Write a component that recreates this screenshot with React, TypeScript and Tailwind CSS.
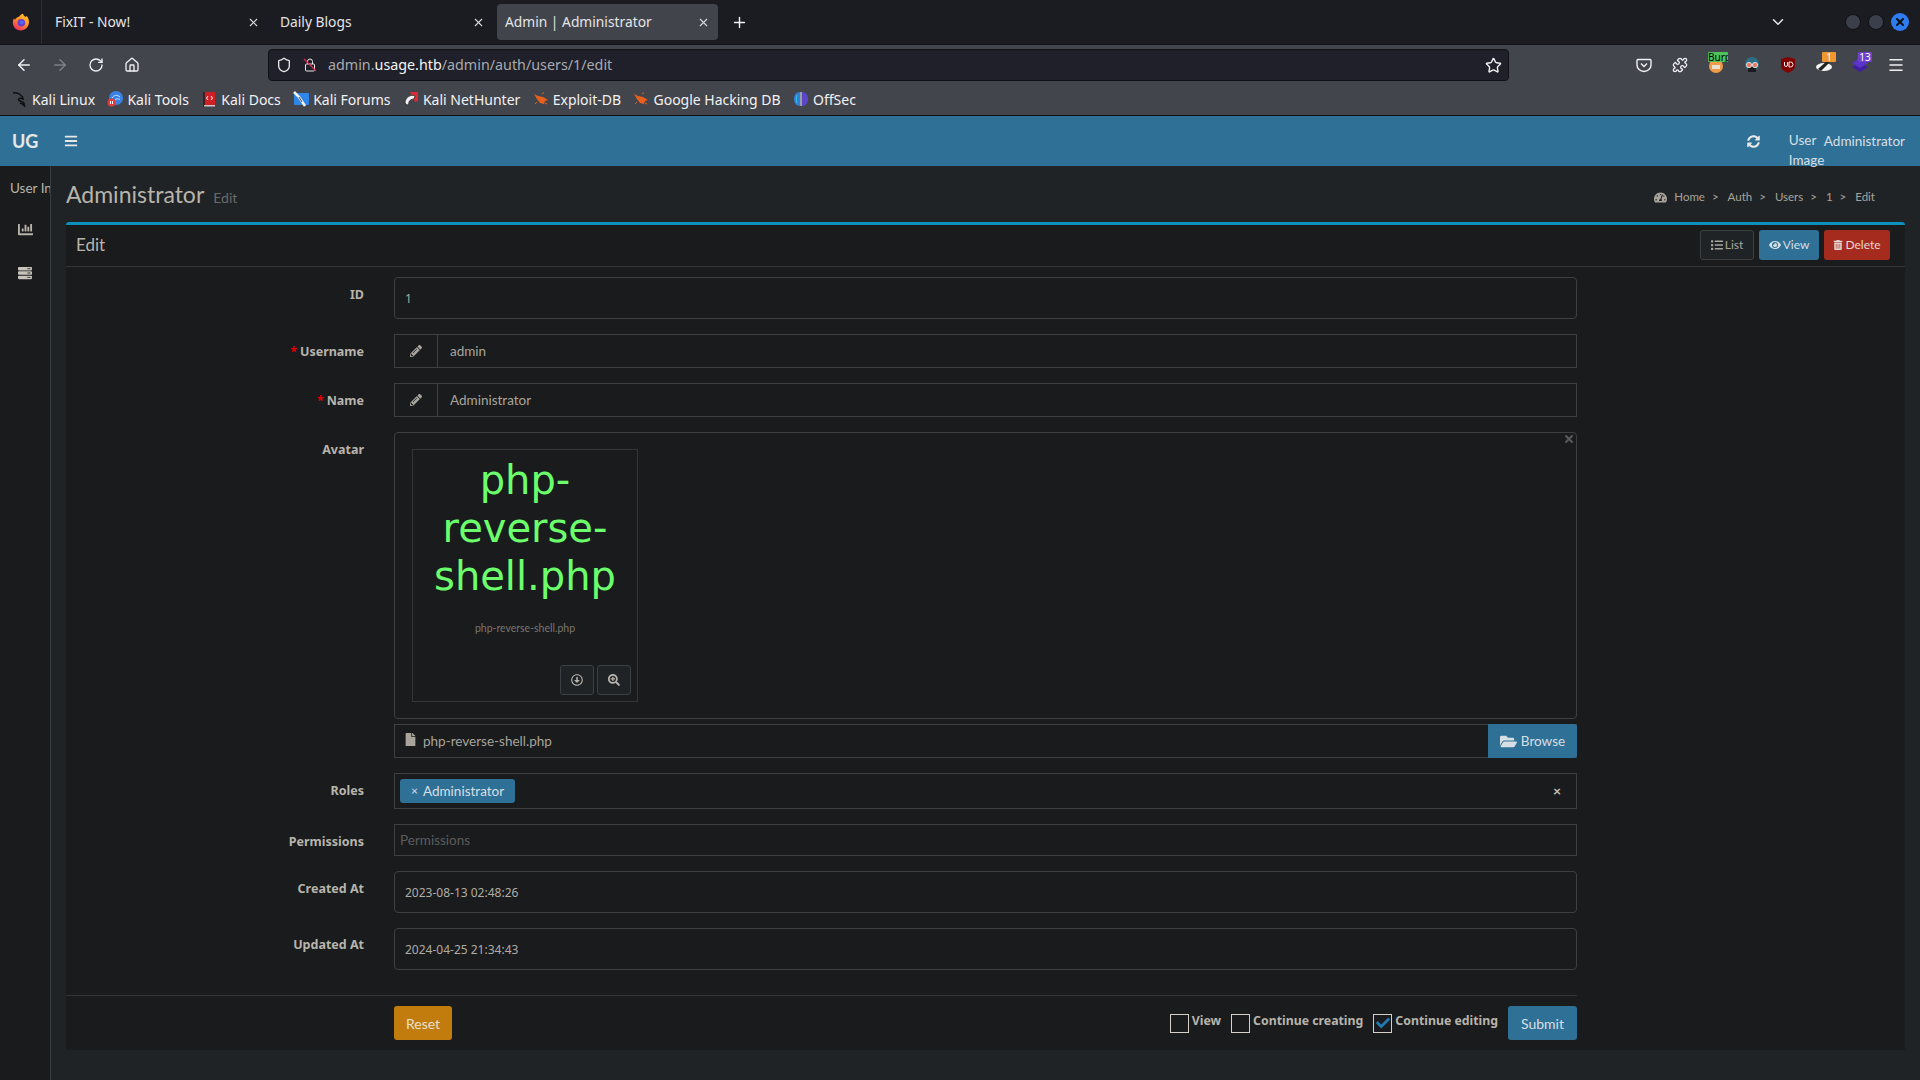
import React from 'react';
import {
  FaBars, FaSyncAlt, FaChartBar, FaServer, FaTachometerAlt, FaList, FaEye, FaTrashAlt,
  FaPencilAlt, FaFile, FaFolderOpen, FaSearchPlus, FaRegArrowAltCircleDown, FaCheck,
} from 'react-icons/fa';
import { ArrowLeft, ArrowRight, RotateCw, Home, Star, ChevronDown, Plus, X, Menu, Shield, Puzzle } from 'lucide-react';

const PAGE_FONT = { fontFamily: '"Lato", "Noto Sans", sans-serif' };
const LABEL_FONT = { fontFamily: '"Noto Sans", sans-serif' };

function Tab({ title, active }: { title: string; active?: boolean }) {
  return (
    <div className={`w-[221px] h-9 mr-[4px] flex items-center justify-between px-[8px] rounded-[4px] ${active ? 'bg-[#42444c]' : ''}`}>
      <span className="text-[13.8px] text-[#e4e4e6]">{title}</span>
      <X size={13} className="text-[#d8d8da]" />
    </div>
  );
}

function Firefox() {
  return (
    <svg width="18" height="18" viewBox="0 0 18 18">
      <defs>
        <linearGradient id="fx" x1="0.8" y1="0" x2="0.2" y2="1">
          <stop offset="0" stopColor="#ffc926" />
          <stop offset="0.5" stopColor="#ff8a2a" />
          <stop offset="1" stopColor="#f0246b" />
        </linearGradient>
      </defs>
      <path d="M11 .8c.3 1.6 1.3 2.2 2.4 3.1.8-.3 1.2-.5 1.4-.8 1.3 1.6 2.2 3.5 2.2 5.9 0 4.8-3.6 8.5-8.3 8.5C4.2 17.5.8 14.1.8 9.8c0-1.7.5-3.3 1.3-4.5.2.8.6 1.3 1 1.5.8-1.7 2.3-2.7 4-3 .3-.9 1.8-2.4 3.9-3z" fill="url(#fx)" />
      <circle cx="9.3" cy="9.8" r="3.8" fill="#6c3bd0" />
      <circle cx="9.8" cy="9.3" r="1.9" fill="#4a6ff0" />
    </svg>
  );
}

function Mark({ children }: { children: React.ReactNode }) {
  return <svg width="16" height="16" viewBox="0 0 16 16" className="shrink-0">{children}</svg>;
}

const BUG = (
  <Mark>
    <path d="M1 3l4 2 5 1 5 3-3 1-1 3-4-1-3-4z" fill="#e8601c" />
    <path d="M4 11l-2 2M9 3l2-1.5M12 12l2 1" stroke="#e8601c" strokeWidth="1" />
  </Mark>
);

const BOOKMARKS: { label: string; icon: React.ReactNode }[] = [
  { label: 'Kali Linux', icon: <Mark><path d="M1 2c3-.5 5 0 7 1.5 2 1.5 3 3 3 4.5-2-1-4-1-4.500.5-.5 1.5 3 1.5 5 3 .8.8 1 2 1 3.5-1-1.5-2.5-2.5-4.5-3" fill="none" stroke="#0d0e10" strokeWidth="1.5" /></Mark> },
  { label: 'Kali Tools', icon: <Mark><circle cx="9" cy="7" r="7" fill="#3a83e6" /><path d="M5 7c2-3 5-3.5 8-1M8 9c1.5-1.5 3-1.5 5-.5" stroke="#cfe4fa" fill="none" strokeWidth="1" /><circle cx="4.5" cy="11.5" r="4" fill="#e23b3b" /><path d="M3.5 10v3M5.5 10v3" stroke="#fff" /></Mark> },
  { label: 'Kali Docs', icon: <Mark><rect x="3" y="1" width="11" height="13" fill="#cf1f24" /><rect x="2" y="1" width="2" height="15" fill="#4a1a20" /><rect x="3" y="14" width="11" height="1.5" fill="#c9c9c9" /><path d="M7 5L5.5 7 7 9M10 5l1.5 2L10 9" stroke="#fff" fill="none" /></Mark> },
  { label: 'Kali Forums', icon: <Mark><rect x="1" y="2" width="15" height="12" rx="1" fill="#2f86e8" /><path d="M1 1l5 5 6 9" stroke="#f4f4f4" strokeWidth="2.5" fill="none" /><path d="M6 6l3 5" stroke="#1a1a1a" strokeWidth=".8" /></Mark> },
  { label: 'Kali NetHunter', icon: <Mark><path d="M7 1h8v9l-3 1z" fill="#dc2b35" /><path d="M12 5C8 3 3 6 2 11c0 2 2 3 4 3-1-3 1-6 5-6z" fill="#f2f2f2" stroke="#1a1a1a" strokeWidth=".7" /></Mark> },
  { label: 'Exploit-DB', icon: BUG },
  { label: 'Google Hacking DB', icon: BUG },
  { label: 'OffSec', icon: <Mark><path d="M7 1C3 1 1 4 1 8s2 7 6 7z" fill="#2f7fd8" /><path d="M9 1c4 0 6 3 6 7s-2 7-6 7z" fill="#5b46c8" /><path d="M4 4c-1 2-1 6 0 8" stroke="#38c6e0" fill="none" /><rect x="7.4" y="1" width="1.2" height="14" fill="#d8d8d8" /></Mark> },
];

function Bar({ children }: { children: React.ReactNode }) {
  return <div className="w-9 h-[18px] flex items-center justify-center relative text-[#f0f0f2]">{children}</div>;
}

function BrowserChrome() {
  return (
    <div style={{ fontFamily: '"Noto Sans", sans-serif' }}>
      <div className="h-[44px] bg-[#1b1c22] flex items-center">
        <div className="w-[42px] h-full flex items-center justify-center border-r border-[#2b2c32]"><Firefox /></div>
        <div className="w-[5px]" />
        <Tab title="FixIT - Now!" />
        <Tab title="Daily Blogs" />
        <Tab title="Admin | Administrator" active />
        <Plus size={17} className="text-[#f0f0f2] ml-[9px]" />
        <div className="flex-1" />
        <ChevronDown size={18} className="text-[#e8e8ea] mr-[58px]" />
        <div className="w-4 h-4 rounded-full bg-[#3a3f4b] border border-[#111] mr-[7px]" />
        <div className="w-4 h-4 rounded-full bg-[#3a3f4b] border border-[#111] mr-[7px]" />
        <div className="w-[18px] h-[18px] rounded-full bg-[#2f7bf0] flex items-center justify-center mr-[11px]"><X size={12} strokeWidth={4} className="text-[#101010]" /></div>
      </div>
      <div className="h-[41px] bg-[#43454d] flex items-center border-t border-[#111216] pl-[6px]">
        <Bar><ArrowLeft size={18} /></Bar>
        <Bar><ArrowRight size={18} className="text-[#7e8087]" /></Bar>
        <Bar><RotateCw size={16} /></Bar>
        <Bar><Home size={16} /></Bar>
        <div className="w-[1241px] h-8 ml-[118px] bg-[#1f2029] border border-[#111216] rounded-[4px] flex items-center pl-[7px] pr-[6px]">
          <Shield size={16} className="text-[#e8e8ea]" />
          <svg width="16" height="16" viewBox="0 0 16 16" className="ml-[10px]" fill="none">
            <rect x="3.5" y="7" width="9" height="7" rx="1" stroke="#e8e8ea" />
            <path d="M5.5 7V4.5a2.5 2.5 0 0 1 5 0V7" stroke="#e8e8ea" />
            <path d="M2 2l12 12" stroke="#e0284f" strokeWidth="1.3" />
          </svg>
          <span className="ml-[10px] text-[14.3px] text-[#a9aab0]">admin.<span className="text-[#f4f4f5]">usage.htb</span>/admin/auth/users/1/edit</span>
          <div className="flex-1" />
          <Star size={17} className="text-[#f0f0f2]" />
        </div>
        <div className="w-[117px]" />
        <Bar>
          <svg width="16" height="16" viewBox="0 0 16 16" fill="none" stroke="#f0f0f2" strokeWidth="1.4"><path d="M2 2.5h12a1 1 0 0 1 1 1V8a7 6.5 0 0 1-14 0V3.5a1 1 0 0 1 1-1z" /><path d="M5 6.5l3 3 3-3" /></svg>
        </Bar>
        <Bar><Puzzle size={16} /></Bar>
        <Bar>
          <svg width="16" height="16" viewBox="0 0 16 16"><circle cx="8" cy="9" r="7" fill="#ef9b47" /><rect x="4" y="8" width="8" height="4" fill="#e8e0d0" /></svg>
          <span className="absolute top-[-4px] left-[10px] h-[10px] w-[20px] bg-[#4fc25c] text-[10px] leading-[10px] text-black overflow-hidden rounded-[1px] whitespace-nowrap">Burp</span>
        </Bar>
        <Bar>
          <svg width="16" height="16" viewBox="0 0 16 16"><circle cx="8" cy="7" r="7" fill="#2a6f86" /><rect x="4" y="10" width="8" height="5" fill="#1c1c20" /><circle cx="5" cy="8" r="2.6" fill="#ee7863" stroke="#ddd" /><circle cx="11" cy="8" r="2.6" fill="#ee7863" stroke="#ddd" /></svg>
        </Bar>
        <Bar>
          <svg width="14" height="16" viewBox="0 0 14 16"><path d="M7 0l7 2v7c0 3-3 5-7 7-4-2-7-4-7-7V2z" fill="#800000" /><path d="M3.5 5v3a1.5 1.5 0 0 0 3 0V5M8 5v5h1.5a2.5 2.5 0 0 0 0-5z" fill="none" stroke="#eee" /></svg>
        </Bar>
        <Bar>
          <svg width="16" height="14" viewBox="0 0 16 14"><ellipse cx="8" cy="9" rx="8" ry="4" fill="#f3f3f3" /><path d="M2 11l9-8 2 2-8 8z" fill="#222" /></svg>
          <span className="absolute top-[-4px] left-[16px] h-[10px] w-[14px] bg-[#f0982f] text-[10px] leading-[10px] text-white text-center rounded-[1px]">1</span>
        </Bar>
        <Bar>
          <svg width="16" height="14" viewBox="0 0 16 14"><path d="M8 4l8 5-8 5-8-5z" fill="#3f1f9e" /><path d="M8 0l8 5-8 5-8-5z" fill="#5a35c9" /></svg>
          <span className="absolute top-[-4px] left-[16px] h-[10px] w-[14px] bg-[#6f42c9] text-[10px] leading-[10px] text-white text-center rounded-[1px]">13</span>
        </Bar>
        <Bar><Menu size={18} /></Bar>
      </div>
      <div className="h-[31px] bg-[#43454d] border-b border-[#101114] flex items-center pl-[12px] pb-[2px] gap-[12.4px] text-[14px] text-[#f2f2f3]">
        {BOOKMARKS.map((b) => (
          <div key={b.label} className="flex items-center gap-[4px]">{b.icon}<span>{b.label}</span></div>
        ))}
      </div>
    </div>
  );
}

function Sidebar() {
  return (
    <div className="w-[51px] shrink-0 bg-[#191b1d] border-r border-[#3a3d3f] overflow-hidden">
      <div className="pl-[10px] mt-[13px] text-[13.5px] text-[#b8b4ab] whitespace-nowrap leading-[18px]">User Information</div>
      <FaChartBar size={15} className="ml-[18px] mt-[25px] text-[#b8b4ab]" />
      <FaServer size={14} className="ml-[18px] mt-[29px] text-[#c8c4bb]" />
    </div>
  );
}

function Crumb({ children }: { children: React.ReactNode }) {
  return <span className="text-[11.5px] text-[#a8a49c]">{children}</span>;
}

function Row({ label, required, labelPad, children }: { label: string; required?: boolean; labelPad: number; children: React.ReactNode }) {
  return (
    <div className="flex items-start mb-[15px]">
      <div className="w-[298px] text-right text-[12.5px] font-bold text-[#b8b4ab] leading-[18px]" style={{ ...LABEL_FONT, paddingTop: labelPad }}>
        {required && <span className="text-[#e00000] mr-[3px]">*</span>}
        {label}
      </div>
      <div className="w-[1183px] ml-[30px]">{children}</div>
    </div>
  );
}

function PlainInput({ value }: { value: string }) {
  return (
    <div className="h-[42px] border border-[#3d4042] rounded-[4px] flex items-center pl-[10px] pt-[2px] text-[12px] text-[#b0aca4]" style={LABEL_FONT}>{value}</div>
  );
}

function AddonInput({ value }: { value: string }) {
  return (
    <div className="h-[34px] border border-[#3d4042] flex items-center text-[13.5px] text-[#a8a49c]">
      <div className="w-[43px] h-full border-r border-[#3d4042] flex items-center justify-center">
        <FaPencilAlt size={12} className="text-[#a8a49c]" />
      </div>
      <span className="pl-[12px]">{value}</span>
    </div>
  );
}

function Check({ label, checked }: { label: string; checked?: boolean }) {
  return (
    <div className="flex items-center ml-[10px]">
      <div className="w-[19px] h-[19px] border border-[#d4d0c8] flex items-center justify-center mr-[3px]">
        {checked && <FaCheck size={14} className="text-[#2279b0]" />}
      </div>
      <span className="text-[12.3px] font-bold text-[#b8b4ab] -mt-[3px]" style={LABEL_FONT}>{label}</span>
    </div>
  );
}

function AvatarBox() {
  return (
    <div className="relative h-[287px] border border-[#3d4042] rounded-[4px] pl-[17px] pt-[16px]">
      <X size={12} strokeWidth={4} className="absolute top-0 right-[1px] text-[#5a5a5a]" />
      <div className="relative w-[226px] h-[253px] border border-[#333638] flex flex-col items-center">
        <div className="mt-[6px] w-full px-[5px] text-center text-[40px] leading-[48px] text-[#6cff6c]" style={{ fontFamily: '"DejaVu Sans", sans-serif' }}>
          php-reverse-shell.php
        </div>
        <div className="mt-[21px] text-[10.5px] text-[#7a7670]">php-reverse-shell.php</div>
        <div className="absolute right-[6px] bottom-[6px] flex gap-[3px]">
          <div className="w-[34px] h-[30px] bg-[#1f2325] border border-[#3d4042] rounded-[3px] flex items-center justify-center">
            <FaRegArrowAltCircleDown size={12} className="text-[#b8b4ab]" />
          </div>
          <div className="w-[34px] h-[30px] bg-[#1f2325] border border-[#3d4042] rounded-[3px] flex items-center justify-center">
            <FaSearchPlus size={12} className="text-[#b8b4ab]" />
          </div>
        </div>
      </div>
    </div>
  );
}

export default function App() {
  return (
    <div className="w-[1920px] h-[1080px] overflow-hidden flex flex-col bg-[#1f2325]">
      <BrowserChrome />
      <div className="flex-1 flex flex-col" style={PAGE_FONT}>
        <div className="h-[50px] bg-[#2f7196] flex items-center text-[#d8dfe4]">
          <span className="ml-[12px] text-[18px] font-bold text-[#e8e8e8]">UG</span>
          <FaBars size={14} className="ml-[26px] text-[#e8e8e8]" />
          <div className="flex-1" />
          <FaSyncAlt size={13} className="text-[#e8e8e8] mr-[29px]" />
          <div className="w-[35px] text-[13.5px] leading-[20px] mt-[17px]">User Image</div>
          <span className="text-[13.5px] mr-[15px]">Administrator</span>
        </div>
        <div className="flex-1 flex min-h-0">
          <Sidebar />
          <div className="flex-1 px-[15px]">
            <div className="h-[56px] flex items-center justify-between">
              <div className="flex items-baseline">
                <span className="text-[23px] text-[#b8b4ab]">Administrator</span>
                <span className="ml-[9px] text-[14px] text-[#6a6a6a]">Edit</span>
              </div>
              <div className="flex items-center gap-[7px] mr-[30px] mt-[6px]">
                <FaTachometerAlt size={13} className="text-[#a8a49c]" />
                <Crumb>Home</Crumb><Crumb>&gt;</Crumb>
                <Crumb><span className="ml-[2px]">Auth</span></Crumb><Crumb>&gt;</Crumb>
                <Crumb><span className="ml-[2px]">Users</span></Crumb><Crumb>&gt;</Crumb>
                <Crumb><span className="ml-[2px]">1</span></Crumb><Crumb>&gt;</Crumb>
                <Crumb><span className="ml-[2px]">Edit</span></Crumb>
              </div>
            </div>
            <div className="h-[828px] bg-[#191b1d] border-t-[3px] border-[#0c8fbb] rounded-t-[3px]">
              <div className="h-[42px] border-b border-[#333638] flex items-center pl-[10px] pr-[15px]">
                <span className="text-[17px] text-[#b8b4ab] -mt-[2px]">Edit</span>
                <div className="flex-1" />
                <div className="h-[30px] w-[54px] -mt-[2px] bg-[#1f2325] border border-[#3d4042] rounded-[3px] flex items-center justify-center gap-[2px] text-[12px] text-[#a8a49c]">
                  <FaList size={12} />List
                </div>
                <div className="h-[30px] w-[60px] -mt-[2px] ml-[5px] bg-[#2f7196] rounded-[3px] flex items-center justify-center gap-[2px] text-[12px] text-[#d8dfe4]">
                  <FaEye size={12} />View
                </div>
                <div className="h-[30px] w-[66px] -mt-[2px] ml-[5px] bg-[#a52b1e] rounded-[3px] flex items-center justify-center gap-[2px] text-[12px] text-[#e6d8d4]">
                  <FaTrashAlt size={10} />Delete
                </div>
              </div>
              <div className="pt-[10px]">
                <Row label="ID" labelPad={9}><PlainInput value="1" /></Row>
                <Row label="Username" required labelPad={9}><AddonInput value="admin" /></Row>
                <Row label="Name" required labelPad={9}><AddonInput value="Administrator" /></Row>
                <Row label="Avatar" labelPad={9}>
                  <AvatarBox />
                  <div className="mt-[5px] h-[34px] border border-[#3d4042] flex items-center">
                    <FaFile size={13} className="ml-[9px] -mt-[3px] text-[#a8a49c]" />
                    <span className="ml-[6px] text-[13.5px] text-[#a8a49c]">php-reverse-shell.php</span>
                    <div className="flex-1" />
                    <div className="w-[89px] h-[34px] -mr-px bg-[#2f7196] rounded-r-[3px] flex items-center justify-center gap-[4px] text-[13.5px] text-[#d8dfe4]">
                      <FaFolderOpen size={17} />Browse
                    </div>
                  </div>
                </Row>
                <Row label="Roles" labelPad={9}>
                  <div className="h-[36px] border border-[#3d4042] flex items-center pl-[5px] pr-[15px]">
                    <div className="h-[24px] w-[115px] bg-[#2f7196] rounded-[3px] flex items-center pl-[11px] gap-[5px] text-[13.5px] text-[#d8dfe4]">
                      <span className="text-[12px]">×</span>Administrator
                    </div>
                    <div className="flex-1" />
                    <span className="text-[14px] font-bold text-[#c8c4bb] -mt-[2px]">×</span>
                  </div>
                </Row>
                <Row label="Permissions" labelPad={9}>
                  <div className="h-[32px] border border-[#3d4042] flex items-center pl-[5px] text-[13.5px] text-[#5c5c5c]">Permissions</div>
                </Row>
                <Row label="Created At" labelPad={9}><PlainInput value="2023-08-13 02:48:26" /></Row>
                <Row label="Updated At" labelPad={8}><PlainInput value="2024-04-25 21:34:43" /></Row>
              </div>
              <div className="mt-[25px] h-[54px] border-t border-[#333638] pt-[10px] pl-[328px] flex items-start w-[1511px]">
                <div className="h-[34px] w-[58px] bg-[#c27c0e] rounded-[3px] flex items-center justify-center text-[14px] text-[#e8e0d0]">Reset</div>
                <div className="flex-1" />
                <div className="h-[34px] flex items-center">
                  <Check label="View" />
                  <Check label="Continue creating" />
                  <Check label="Continue editing" checked />
                  <div className="h-[34px] w-[69px] ml-[10px] bg-[#2f7196] rounded-[3px] flex items-center justify-center text-[14px] text-[#d8dfe4]">Submit</div>
                </div>
              </div>
            </div>
          </div>
        </div>
      </div>
    </div>
  );
}
